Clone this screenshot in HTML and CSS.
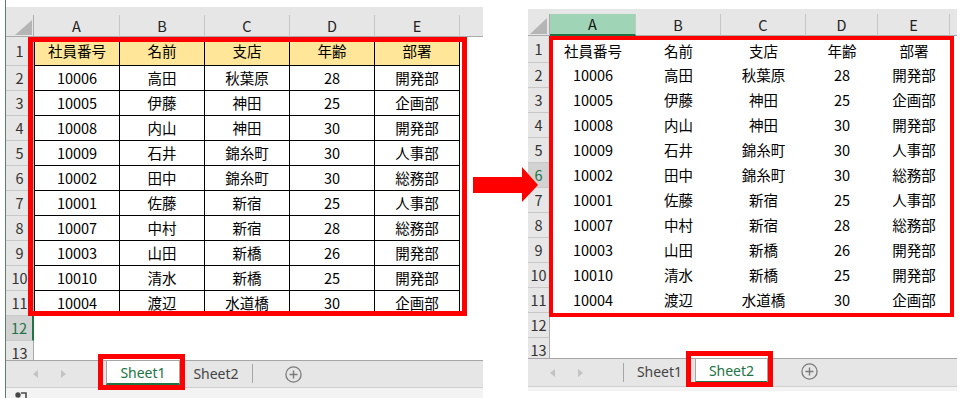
FILE: index.html
```html
<!DOCTYPE html>
<html lang="ja">
<head>
<meta charset="utf-8">
<title>Sheet copy</title>
<link rel="stylesheet" href="styles.css">
</head>
<body>
<main class="page">
  <section class="book book-l">
    <div class="strip"></div>
    <div class="grid grid-l">
      <div class="corner"></div><div class="ch">A</div><div class="ch">B</div><div class="ch">C</div><div class="ch">D</div><div class="ch">E</div><div class="ch fill"></div>
      <div class="rh">1</div><div class="c t a h">社員番号</div><div class="c t h">名前</div><div class="c t h">支店</div><div class="c t h">年齢</div><div class="c t h">部署</div><div class="c"></div>
      <div class="rh">2</div><div class="c t a">10006</div><div class="c t">高田</div><div class="c t">秋葉原</div><div class="c t">28</div><div class="c t">開発部</div><div class="c"></div>
      <div class="rh">3</div><div class="c t a">10005</div><div class="c t">伊藤</div><div class="c t">神田</div><div class="c t">25</div><div class="c t">企画部</div><div class="c"></div>
      <div class="rh">4</div><div class="c t a">10008</div><div class="c t">内山</div><div class="c t">神田</div><div class="c t">30</div><div class="c t">開発部</div><div class="c"></div>
      <div class="rh">5</div><div class="c t a">10009</div><div class="c t">石井</div><div class="c t">錦糸町</div><div class="c t">30</div><div class="c t">人事部</div><div class="c"></div>
      <div class="rh">6</div><div class="c t a">10002</div><div class="c t">田中</div><div class="c t">錦糸町</div><div class="c t">30</div><div class="c t">総務部</div><div class="c"></div>
      <div class="rh">7</div><div class="c t a">10001</div><div class="c t">佐藤</div><div class="c t">新宿</div><div class="c t">25</div><div class="c t">人事部</div><div class="c"></div>
      <div class="rh">8</div><div class="c t a">10007</div><div class="c t">中村</div><div class="c t">新宿</div><div class="c t">28</div><div class="c t">総務部</div><div class="c"></div>
      <div class="rh">9</div><div class="c t a">10003</div><div class="c t">山田</div><div class="c t">新橋</div><div class="c t">26</div><div class="c t">開発部</div><div class="c"></div>
      <div class="rh">10</div><div class="c t a">10010</div><div class="c t">清水</div><div class="c t">新橋</div><div class="c t">25</div><div class="c t">開発部</div><div class="c"></div>
      <div class="rh">11</div><div class="c t a">10004</div><div class="c t">渡辺</div><div class="c t">水道橋</div><div class="c t">30</div><div class="c t">企画部</div><div class="c"></div>
      <div class="rh sel">12</div><div class="c"></div><div class="c"></div><div class="c"></div><div class="c"></div><div class="c"></div><div class="c"></div>
      <div class="rh">13</div><div class="c"></div><div class="c"></div><div class="c"></div><div class="c"></div><div class="c"></div><div class="c"></div>
    </div>
    <div class="tabbar tabbar-l">
      <div class="nav"><span class="tri tri-l"></span><span class="tri tri-r"></span></div>
      <div class="tab on">Sheet1</div>
      <div class="tab">Sheet2</div>
      <span class="sep"></span>
      <svg class="plus" width="17" height="17" viewBox="0 0 17 17"><circle cx="8.5" cy="8.5" r="7.6" fill="none" stroke="#7a7a7a" stroke-width="1.3"/><path d="M4.5 8.5H12.5M8.5 4.5V12.5" stroke="#7a7a7a" stroke-width="1.4"/></svg>
    </div>
    <div class="status">
      <svg class="rec" width="14" height="8" viewBox="0 0 14 8"><circle cx="3" cy="4" r="2.7" fill="#4a4a4a"/><path d="M6 2H11V7" fill="none" stroke="#4a4a4a" stroke-width="1.6"/></svg>
    </div>
    <div class="mark mark-grid-l"></div>
    <div class="mark mark-tab-l"></div>
  </section>

  <section class="book book-r">
    <div class="strip"></div>
    <div class="grid grid-r">
      <div class="corner"></div><div class="ch on">A</div><div class="ch">B</div><div class="ch">C</div><div class="ch">D</div><div class="ch">E</div><div class="ch fill"></div>
      <div class="rh">1</div><div class="c r1">社員番号</div><div class="c r1">名前</div><div class="c r1">支店</div><div class="c r1">年齢</div><div class="c r1">部署</div><div class="c"></div>
      <div class="rh">2</div><div class="c">10006</div><div class="c">高田</div><div class="c">秋葉原</div><div class="c">28</div><div class="c">開発部</div><div class="c"></div>
      <div class="rh">3</div><div class="c">10005</div><div class="c">伊藤</div><div class="c">神田</div><div class="c">25</div><div class="c">企画部</div><div class="c"></div>
      <div class="rh">4</div><div class="c">10008</div><div class="c">内山</div><div class="c">神田</div><div class="c">30</div><div class="c">開発部</div><div class="c"></div>
      <div class="rh">5</div><div class="c">10009</div><div class="c">石井</div><div class="c">錦糸町</div><div class="c">30</div><div class="c">人事部</div><div class="c"></div>
      <div class="rh sel">6</div><div class="c">10002</div><div class="c">田中</div><div class="c">錦糸町</div><div class="c">30</div><div class="c">総務部</div><div class="c"></div>
      <div class="rh">7</div><div class="c">10001</div><div class="c">佐藤</div><div class="c">新宿</div><div class="c">25</div><div class="c">人事部</div><div class="c"></div>
      <div class="rh">8</div><div class="c">10007</div><div class="c">中村</div><div class="c">新宿</div><div class="c">28</div><div class="c">総務部</div><div class="c"></div>
      <div class="rh">9</div><div class="c">10003</div><div class="c">山田</div><div class="c">新橋</div><div class="c">26</div><div class="c">開発部</div><div class="c"></div>
      <div class="rh">10</div><div class="c">10010</div><div class="c">清水</div><div class="c">新橋</div><div class="c">25</div><div class="c">開発部</div><div class="c"></div>
      <div class="rh">11</div><div class="c">10004</div><div class="c">渡辺</div><div class="c">水道橋</div><div class="c">30</div><div class="c">企画部</div><div class="c"></div>
      <div class="rh">12</div><div class="c"></div><div class="c"></div><div class="c"></div><div class="c"></div><div class="c"></div><div class="c"></div>
      <div class="rh">13</div><div class="c"></div><div class="c"></div><div class="c"></div><div class="c"></div><div class="c"></div><div class="c"></div>
    </div>
    <div class="tabbar tabbar-r">
      <div class="nav"><span class="tri tri-l"></span><span class="tri tri-r"></span></div>
      <span class="sep"></span>
      <div class="tab">Sheet1</div>
      <div class="tab on">Sheet2</div>
      <svg class="plus" width="17" height="17" viewBox="0 0 17 17"><circle cx="8.5" cy="8.5" r="7.6" fill="none" stroke="#7a7a7a" stroke-width="1.3"/><path d="M4.5 8.5H12.5M8.5 4.5V12.5" stroke="#7a7a7a" stroke-width="1.4"/></svg>
    </div>
    <div class="status status-r"></div>
    <div class="mark mark-grid-r"></div>
    <div class="mark mark-tab-r"></div>
  </section>

  <svg class="arrow" width="66" height="36" viewBox="0 0 66 36"><polygon points="0,10 49,10 49,0 65,18 49,35 49,26 0,26" fill="#ff0000"/></svg>
</main>
</body>
</html>
```

FILE: styles.css
```css
* { box-sizing: border-box; margin: 0; padding: 0; }
html, body { background: #fff; }
body {
  width: 967px;
  height: 398px;
  overflow: hidden;
  font-family: "Noto Sans CJK JP", "Noto Sans", sans-serif;
}
.page {
  position: relative;
  display: flex;
  align-items: flex-start;
  padding-left: 5px;
  height: 398px;
}
.book {
  position: relative;
  display: flex;
  flex-direction: column;
}
.book-l {
  width: 478px;
  height: 398px;
  border-left: 1px solid #5f7f6a;
  padding-top: 7px;
}
.book-r {
  width: 429px;
  margin-left: 45px;
  padding-top: 9px;
}
.strip { background: #e6e6e6; }
.book-l .strip { height: 8px; }
.book-r .strip { height: 5px; }

.grid {
  display: grid;
  overflow: hidden;
  font-size: 14.5px;
  line-height: 1;
  color: #000;
}
.grid-l {
  grid-template-columns: 28px 86px 85px 85px 85px 85px 23px;
  grid-template-rows: 22px 29px repeat(12, 25px);
  height: 345px;
}
.grid-r {
  grid-template-columns: 22px 86px 85px 85px 72px 72px 7px;
  grid-template-rows: 22px 27px repeat(12, 25px);
  height: 344px;
}
.grid > div {
  display: flex;
  align-items: center;
  justify-content: center;
  white-space: nowrap;
}
.corner {
  position: relative;
  background: #e6e6e6;
  border-right: 1px solid #ababab;
  border-bottom: 1px solid #ababab;
}
.corner::after {
  content: "";
  position: absolute;
  right: 1px;
  bottom: 1px;
  border-style: solid;
  border-width: 0 0 15px 17px;
  border-color: transparent transparent #b5b5b5 transparent;
}
.grid-r .corner::after { right: 2px; border-width: 0 0 16px 17px; }
.ch {
  background: #e6e6e6;
  border-right: 1px solid #c6c6c6;
  border-bottom: 1px solid #ababab;
  color: #222;
  padding-top: 1px;
}
.ch.fill { border-right: none; }
.ch.on {
  background: #9fd5b6;
  border-bottom: 2px solid #217346;
  color: #111;
}
.rh {
  background: #e6e6e6;
  border-right: 1px solid #ababab;
  border-bottom: 1px solid #c8c8c8;
  color: #333;
}
.rh.sel {
  background: #d2d2d2;
  color: #217346;
}
.grid-l .rh.sel { border-right: 2px solid #217346; }
.c { background: #fff; }
.t {
  border-right: 1px solid #000;
  border-bottom: 1px solid #000;
}
.t.a { border-left: 1px solid #000; }
.t.h {
  border-top: 1px solid #000;
  background: #ffe699;
}
.r1 { padding-top: 4px; }

.tabbar {
  display: flex;
  align-items: flex-start;
  background: #e6e6e6;
  border-top: 1px solid #a6a6a6;
  border-bottom: 1px solid #cfcfcf;
  font-family: "Noto Sans", "Liberation Sans", sans-serif;
  font-size: 14px;
  color: #444;
}
.tabbar-l { height: 28px; }
.tabbar-r { height: 29px; }
.nav {
  display: flex;
  align-items: center;
  gap: 23px;
  height: 26px;
}
.tabbar-l .nav { width: 100px; padding-left: 27px; }
.tabbar-r .nav { width: 95px; padding-left: 22px; height: 27px; }
.tri {
  width: 0;
  height: 0;
  border-top: 4.5px solid transparent;
  border-bottom: 4.5px solid transparent;
}
.tri-l { border-right: 5px solid #c3c3c3; }
.tri-r { border-left: 5px solid #c3c3c3; }
.tab {
  height: 24px;
  display: flex;
  align-items: center;
  justify-content: center;
  padding-top: 1px;
}
.tabbar-l .tab { width: 72px; }
.tabbar-l .tab.on { width: 74px; }
.tabbar-r .tab { width: 71px; }
.tabbar-r .tab.on { width: 73px; }
.tab.on {
  background: #fff;
  color: #217346;
  border-left: 1px solid #a6a6a6;
  border-right: 1px solid #a6a6a6;
  border-bottom: 2px solid #217346;
}
.sep {
  width: 1px;
  height: 19px;
  background: #a6a6a6;
  margin-top: 3px;
}
.tabbar-r .sep { margin-top: 4px; }
.plus { display: block; }
.tabbar-l .plus { margin-left: 32px; margin-top: 5px; }
.tabbar-r .plus { margin-left: 33px; margin-top: 4px; }

.status {
  height: 10px;
  background: #f3f3f3;
}
.status .rec { display: block; margin: 3px 0 0 9px; }
.status-r { height: 4px; }

.mark {
  position: absolute;
  border: 5px solid #ff0000;
}
.mark-grid-l { left: 22px; top: 37px; width: 439px; height: 279px; }
.mark-tab-l { left: 92px; top: 354px; width: 87px; height: 36px; }
.mark-grid-r { left: 21px; top: 36px; width: 405px; height: 281px; border-width: 4px; }
.mark-tab-r { left: 158px; top: 351px; width: 87px; height: 36px; }

.arrow {
  position: absolute;
  left: 473px;
  top: 167px;
}
```
